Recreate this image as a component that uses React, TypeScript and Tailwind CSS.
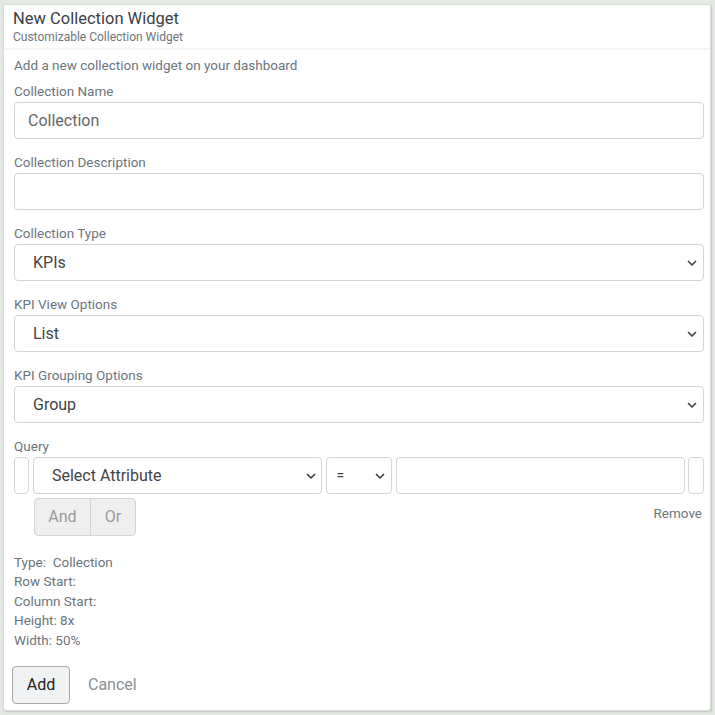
import React from "react";

const Chevron = () => (
  <svg width="12" height="12" viewBox="0 0 12 12" className="shrink-0">
    <path d="M2.5 4.5 L6 8 L9.5 4.5" fill="none" stroke="#444" strokeWidth="1.7" strokeLinecap="round" strokeLinejoin="round" />
  </svg>
);

const Label = ({ children }: { children: React.ReactNode }) => (
  <div className="h-[21px] leading-[21px] text-[13.5px] text-[#6c757d]">{children}</div>
);

const Select = ({ value }: { value: string }) => (
  <div className="h-[37px] border border-[#d4d4d4] rounded-[4px] bg-white flex items-center pl-[18px] pr-[5px] justify-between">
    <span className="text-[16px] text-[#444]">{value}</span>
    <Chevron />
  </div>
);

export default function App() {
  return (
    <div className="w-[715px] h-[715px] bg-[#e4e8e3] pt-[4px] pl-[3px] font-['Roboto',sans-serif]">
      <div className="w-[708px] h-[707px] bg-white border border-[#dcdcdc] rounded-[3px] shadow-[1px_1px_2px_rgba(0,0,0,0.15)] flex flex-col">
        <div className="h-[45px] px-[9px] pt-[4px] border-b-[2px] border-[#f4f5f4]">
          <div className="text-[16.5px] leading-[20px] text-[#3b4046]">New Collection Widget</div>
          <div className="text-[12px] leading-[16px] text-[#6c757d]">Customizable Collection Widget</div>
        </div>
        <div className="pl-[10px] pr-[6px] flex flex-col">
          <div className="h-[31px] leading-[30px] text-[13.5px] text-[#6c757d]">Add a new collection widget on your dashboard</div>

          <div className="mb-[13px]">
            <Label>Collection Name</Label>
            <div className="h-[37px] border border-[#d4d4d4] rounded-[4px] flex items-center pl-[13px] text-[16px] text-[#666]">Collection</div>
          </div>
          <div className="mb-[13px]">
            <Label>Collection Description</Label>
            <div className="h-[37px] border border-[#d4d4d4] rounded-[4px]"></div>
          </div>
          <div className="mb-[13px]">
            <Label>Collection Type</Label>
            <Select value="KPIs" />
          </div>
          <div className="mb-[13px]">
            <Label>KPI View Options</Label>
            <Select value="List" />
          </div>
          <div className="mb-[13px]">
            <Label>KPI Grouping Options</Label>
            <Select value="Group" />
          </div>
          <div>
            <Label>Query</Label>
            <div className="flex items-center h-[37px]">
              <div className="w-[15px] h-[37px] border border-[#d4d4d4] rounded-[4px]"></div>
              <div className="ml-[4px] w-[289px] h-[37px] border border-[#d4d4d4] rounded-[4px] flex items-center justify-between pl-[18px] pr-[4px]">
                <span className="text-[16px] text-[#444]">Select Attribute</span>
                <Chevron />
              </div>
              <div className="ml-[4px] w-[67px] h-[37px] border border-[#d4d4d4] rounded-[4px] flex items-center justify-between pl-[10px] pr-[5px]">
                <span className="text-[14px] text-[#444]">=</span>
                <Chevron />
              </div>
              <div className="ml-[4px] w-[289px] h-[37px] border border-[#d4d4d4] rounded-[4px]"></div>
              <div className="ml-[3px] w-[16px] h-[37px] border border-[#d4d4d4] rounded-[4px]"></div>
            </div>
            <div className="flex items-start justify-between mt-[4px] pl-[20px]">
              <div className="flex h-[38px] border border-[#d4d4d4] rounded-[4px] bg-[#efefef] overflow-hidden">
                <div className="w-[56px] flex items-center justify-center text-[16px] text-[#9a9a9a] border-r border-[#d4d4d4]">And</div>
                <div className="w-[44px] flex items-center justify-center text-[16px] text-[#9a9a9a]">Or</div>
              </div>
              <div className="text-[13.5px] text-[#6c757d] mt-[5px] mr-[2px]">Remove</div>
            </div>
          </div>
          <div className="mt-[17px] text-[13.5px] leading-[19.4px] text-[#6c757d]">
            <div>Type:&nbsp; Collection</div>
            <div>Row Start:</div>
            <div>Column Start:</div>
            <div>Height: 8x</div>
            <div>Width: 50%</div>
          </div>
          <div className="mt-[16px] flex items-center">
            <div className="ml-[-2px] w-[58px] h-[38px] border border-[#a8a8a8] rounded-[4px] bg-[#f1f2f3] flex items-center justify-center text-[16px] text-[#222]">Add</div>
            <div className="ml-[18px] text-[16px] text-[#8a8f94]">Cancel</div>
          </div>
        </div>
      </div>
    </div>
  );
}
